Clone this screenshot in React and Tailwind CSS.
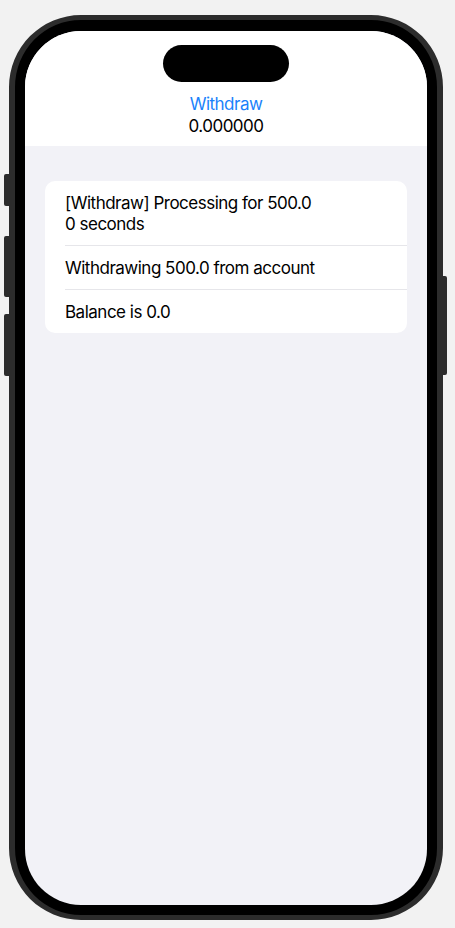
export default function App() {
  const font = { fontFamily: "Inter, 'Noto Sans', sans-serif" };
  return (
    <div className="relative h-[928px] w-[455px] bg-[#f2f2f2] pt-[15px] pl-[9px]" style={font}>
      {/* side buttons */}
      <div className="absolute left-[4px] top-[174px] h-[32px] w-[5px] rounded-l-[2px] bg-[#2c2c2c]" />
      <div className="absolute left-[4px] top-[236px] h-[61px] w-[5px] rounded-l-[2px] bg-[#2c2c2c]" />
      <div className="absolute left-[4px] top-[314px] h-[62px] w-[5px] rounded-l-[2px] bg-[#2c2c2c]" />
      <div className="absolute left-[443px] top-[276px] h-[99px] w-[4px] rounded-r-[2px] bg-[#2c2c2c]" />

      {/* phone */}
      <div className="h-[905px] w-[434px] rounded-[72px] border-x-[6px] border-y-[5px] border-[#2c2c2c] bg-black px-[10px] pt-[11px] pb-[10px]">
        <div className="flex h-full flex-col overflow-hidden rounded-[56px] bg-[#f2f2f7]">
          <div className="flex flex-col items-center bg-white pt-[14px] pb-[10px]">
            <div className="h-[37px] w-[126px] rounded-full bg-black" />
            <div className="mt-[11px] text-[17px] leading-[22px] tracking-[-0.5px] text-[#1a82fb]">Withdraw</div>
            <div className="mb-[-1px] text-[17px] leading-[22px] tracking-[-0.5px] text-black">0.000000</div>
          </div>

          <div className="mx-[20px] mt-[35px] overflow-hidden rounded-[10px] bg-white text-[17px] tracking-[-0.5px] text-black">
            <div className="pl-[20px]">
              <div className="pt-[12px] pb-[10px] pr-[20px] leading-[21px]">
                [Withdraw] Processing for 500.0
                <br />0 seconds
              </div>
              <div className="h-px bg-[#e6e6ea]" />
              <div className="pt-[12px] pb-[10px] pr-[20px] leading-[21px]">Withdrawing 500.0 from account</div>
              <div className="h-px bg-[#e6e6ea]" />
              <div className="pt-[12px] pb-[10px] pr-[20px] leading-[21px]">Balance is 0.0</div>
            </div>
          </div>
        </div>
      </div>
    </div>
  );
}
